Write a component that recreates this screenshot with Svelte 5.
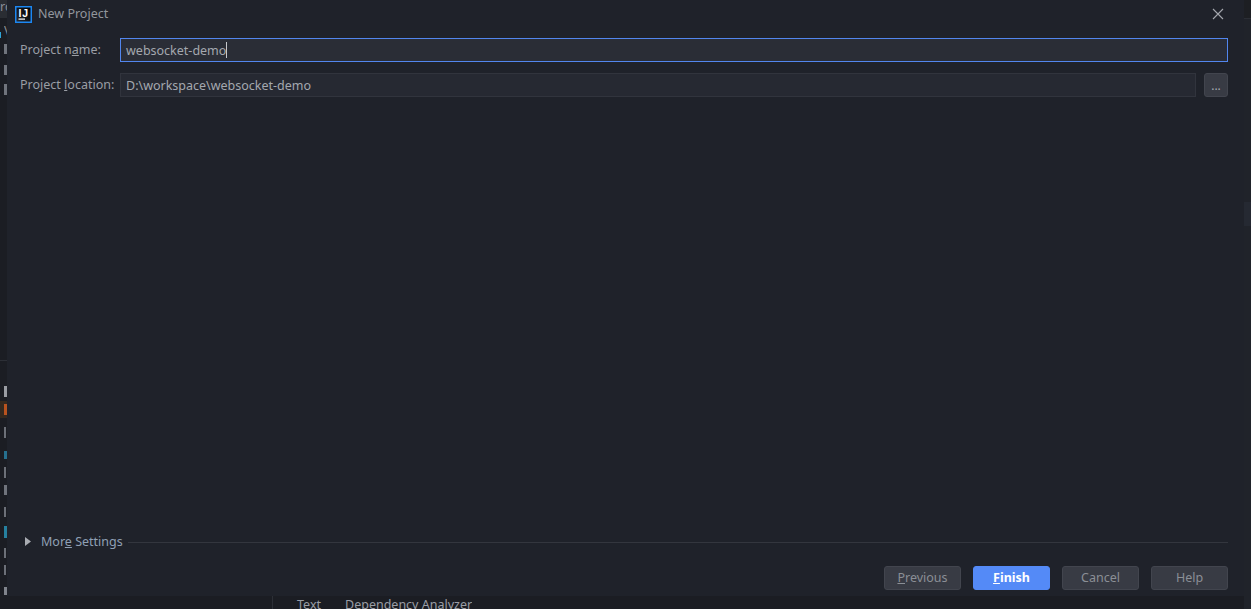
<script>
const stripes = [
  { top: 44, h: 10, w: 3, color: '#70747c' },
  { top: 65, h: 10, w: 3, color: '#70747c' },
  { top: 84, h: 11, w: 3, color: '#70747c' }
]
const lower = [
  { top: 386, h: 11, w: 3, color: '#9a9da3' },
  { top: 404, h: 11, w: 3, color: '#b8531f' },
  { top: 427, h: 11, w: 2, color: '#6c7078' },
  { top: 451, h: 8, w: 3, color: '#26708f' },
  { top: 467, h: 11, w: 2, color: '#6c7078' },
  { top: 485, h: 10, w: 3, color: '#70747c' },
  { top: 507, h: 10, w: 2, color: '#6c7078' },
  { top: 526, h: 12, w: 3, color: '#26809f' },
  { top: 548, h: 10, w: 2, color: '#6c7078' },
  { top: 565, h: 10, w: 2, color: '#6c7078' },
  { top: 587, h: 8, w: 3, color: '#80848c' }
]
</script>

<div class="ide">
  <div class="ide-tabs"><span>rc</span></div>
  <div class="ide-right">
    <i class="right-top"></i>
    <i class="right-thumb"></i>
  </div>
  <div class="row-hl"></div>
  <div class="row-sep"></div>
  <i class="bit sel" style="top:32px;height:6px;width:1px"></i>
  <span class="peek" style="top:24px">V</span>
  {#each stripes as s}
    <i class="bit" style="top:{s.top}px;height:{s.h}px;width:{s.w}px;background:{s.color}"></i>
  {/each}
  {#each lower as s}
    <i class="bit" style="top:{s.top}px;height:{s.h}px;width:{s.w}px;background:{s.color}"></i>
  {/each}
  <div class="bottom-tabs">
    <span>Text</span>
    <span>Dependency Analyzer</span>
  </div>
</div>

<div class="dialog">
  <header class="titlebar">
    <svg class="logo" width="17" height="17" viewBox="0 0 17 17">
      <defs>
        <linearGradient id="ij" x1="1" y1="0" x2="0" y2="1">
          <stop offset="0" stop-color="#000"/>
          <stop offset="1" stop-color="#2a2c30"/>
        </linearGradient>
      </defs>
      <rect x="0.75" y="0.75" width="15.5" height="15.5" fill="url(#ij)" stroke="#1c87f2" stroke-width="1.5"/>
      <rect x="3.5" y="12.5" width="6.5" height="1.2" fill="#fff"/>
      <text x="3.5" y="10.5" class="logo-text">IJ</text>
    </svg>
    <span class="title">New Project</span>
    <svg class="close" width="12" height="12" viewBox="0 0 12 12">
      <path d="M1 1 L11 11 M11 1 L1 11" stroke="#a4a7ad" stroke-width="1.1" fill="none"/>
    </svg>
  </header>

  <div class="form">
    <label class="lbl" for="pname">Project n<u>a</u>me:</label>
    <div class="field focus">
      <span id="pname">websocket-demo</span><i class="caret"></i>
    </div>
    <label class="lbl" for="ploc">Project <u>l</u>ocation:</label>
    <div class="location">
      <div class="field" id="ploc">D:\workspace\websocket-demo</div>
      <button class="browse">...</button>
    </div>
  </div>

  <div class="spacer"></div>

  <div class="more">
    <svg width="6" height="9" viewBox="0 0 6 9"><path d="M0 0 L6 4.5 L0 9 Z" fill="#a9acb2"/></svg>
    <span class="more-label">Mor<u>e</u> Settings</span>
    <div class="rule"></div>
  </div>

  <footer class="actions">
    <button class="btn"><u>P</u>revious</button>
    <button class="btn primary"><u>F</u>inish</button>
    <button class="btn">Cancel</button>
    <button class="btn">Help</button>
  </footer>
</div>

<style>
:global(body) {
  margin: 0;
  background: #1b1d23;
  overflow: hidden;
}

.ide {
  position: relative;
  width: 1251px;
  height: 609px;
  overflow: hidden;
  background: #1b1d23;
  font-family: "Noto Sans", sans-serif;
  font-size: 12.5px;
}

.ide-tabs {
  position: absolute;
  left: 0;
  top: 0;
  width: 7px;
  height: 18px;
  overflow: hidden;
  background: #2a2d33;
  color: #8a8f98;
  line-height: 14px;
  white-space: nowrap;
}

.ide-right {
  position: absolute;
  right: 0;
  top: 0;
  width: 7px;
  height: 100%;
  background: #20232a;
}

.right-top {
  display: block;
  height: 18px;
  background: #1d1f23;
  border-bottom: 1px solid #2b2e35;
}

.right-thumb {
  display: block;
  height: 24px;
  margin-top: 183px;
  background: #252932;
}

.row-hl {
  position: absolute;
  left: 0;
  top: 401px;
  width: 7px;
  height: 17px;
  background: #34291f;
}

.row-sep {
  position: absolute;
  left: 0;
  top: 360px;
  width: 7px;
  height: 1px;
  background: #2c2f36;
}

.bit {
  position: absolute;
  left: 4px;
  display: block;
}

.sel {
  left: 0;
  background: #2fa5d8;
}

.peek {
  position: absolute;
  left: 4px;
  width: 3px;
  overflow: hidden;
  color: #8a8f98;
  line-height: 14px;
}

.bottom-tabs {
  position: absolute;
  left: 272px;
  top: 596px;
  height: 13px;
  padding-left: 24px;
  border-left: 1px solid #2c2f36;
  display: flex;
  gap: 24px;
  color: #9a9ea6;
  line-height: 17px;
  overflow: hidden;
}

.dialog {
  position: absolute;
  left: 7px;
  top: 0;
  width: 1237px;
  height: 596px;
  box-sizing: border-box;
  display: flex;
  flex-direction: column;
  background: #1f222a;
  font-family: "Noto Sans", sans-serif;
  font-size: 12.5px;
  color: #a0a4ab;
}

.titlebar {
  height: 27px;
  display: flex;
  align-items: center;
  padding: 0 20px 0 8px;
}

.logo {
  display: block;
  margin-right: 6px;
  margin-top: 1px;
}

.logo-text {
  font-family: "Liberation Sans", sans-serif;
  font-size: 10.5px;
  font-weight: 700;
  letter-spacing: 0.8px;
  fill: #fff;
}

.title {
  flex: 1;
  color: #92969d;
  line-height: 17px;
  padding-bottom: 1px;
}

.form {
  display: grid;
  grid-template-columns: 100px 1fr;
  row-gap: 11px;
  padding: 11px 16px 0 13px;
}

.lbl {
  line-height: 23px;
  color: #9a9ea5;
}

.field {
  flex: 1;
  height: 24px;
  box-sizing: border-box;
  border: 1px solid #31343d;
  background: #262932;
  padding-left: 5px;
  line-height: 21px;
  color: #a4a8af;
  display: flex;
  align-items: center;
}

.focus {
  border-color: #5286ee;
  background: #2a2d36;
}

.caret {
  display: block;
  width: 1px;
  height: 16px;
  background: #c5c8cc;
}

.location {
  display: flex;
  gap: 8px;
}

.browse {
  width: 24px;
  height: 24px;
  padding: 0;
  border: 1px solid #42454e;
  border-radius: 3px;
  background: #383b44;
  color: #a4a8af;
  font: inherit;
  font-size: 12px;
  line-height: 24px;
}

.spacer {
  flex: 1;
}

.more {
  display: flex;
  align-items: center;
  padding: 0 16px 1px 18px;
  height: 24px;
  box-sizing: border-box;
}

.more svg {
  display: block;
  margin-right: 10px;
}

.more-label {
  color: #8fa0b5;
  margin-right: 5px;
  line-height: 17px;
}

.rule {
  flex: 1;
  height: 1px;
  background: #33363e;
  margin-top: 1px;
}

.actions {
  display: flex;
  justify-content: flex-end;
  gap: 12px;
  padding: 12px 16px 6px 0;
}

.btn {
  width: 77px;
  height: 24px;
  padding: 0;
  border: 1px solid #42454e;
  border-radius: 3px;
  background: #383b44;
  color: #8b8f96;
  font: inherit;
  line-height: 22px;
}

.primary {
  background: #548af7;
  border-color: #548af7;
  color: #fff;
  font-weight: 700;
}
</style>
